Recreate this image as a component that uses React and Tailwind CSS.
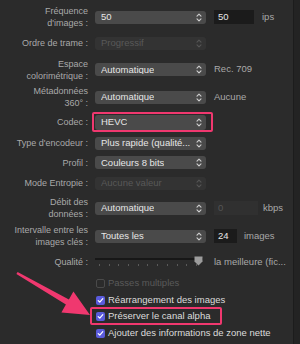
import React from 'react';

const Chevron = ({ dim }) => (
  <svg width="6" height="9" viewBox="0 0 6 9" className="shrink-0">
    <path d="M1 3.2 L3 1.2 L5 3.2 M1 5.8 L3 7.8 L5 5.8" fill="none" stroke={dim ? '#555555' : '#d0d0d0'} strokeWidth="1.1" strokeLinecap="round" strokeLinejoin="round" />
  </svg>
);

const Popup = ({ text, disabled, tall }) => (
  <div
    className={`flex w-[111px] shrink-0 items-center justify-between rounded-[3px] pl-[6px] pr-[4px] ${tall ? 'h-[15px]' : 'h-[13px]'} ${disabled ? 'bg-[#333333] text-[#595959]' : 'bg-[#4a4a4a] text-[#e6e6e6]'}`}
  >
    <span className="truncate text-[9.5px] leading-none">{text}</span>
    <Chevron dim={disabled} />
  </div>
);

const Field = ({ value, w, disabled }) => (
  <div
    className={`ml-[8px] flex h-[14px] shrink-0 items-center px-[4px] text-[9.5px] ${w} ${disabled ? 'bg-[#303030] text-[#555555]' : 'bg-[#1b1b1b] text-[#e6e6e6]'}`}
  >
    {value}
  </div>
);

const Note = ({ children, ml = 'ml-[8px]' }) => (
  <span className={`${ml} text-[9.5px] text-[#a9a9a9] whitespace-nowrap`}>{children}</span>
);

const Row = ({ h, label, children }) => (
  <div className={`flex items-center ${h}`}>
    <div className="w-[88px] shrink-0 text-right text-[9px] leading-[12px] text-[#a9a9a9]">{label}</div>
    <div className="ml-[7px] flex min-w-0 items-center">{children}</div>
  </div>
);

const Check = ({ on, label, h }) => (
  <div className={`flex items-center ${h}`}>
    {on ? (
      <div className="flex h-[9px] w-[9px] shrink-0 items-center justify-center rounded-[2px] bg-[#5a5bdc]">
        <svg width="7" height="7" viewBox="0 0 7 7">
          <path d="M1.2 3.6 L2.8 5.2 L5.8 1.6" fill="none" stroke="#ffffff" strokeWidth="1.2" strokeLinecap="round" strokeLinejoin="round" />
        </svg>
      </div>
    ) : (
      <div className="h-[9px] w-[9px] shrink-0 rounded-[2px] border border-[#4a4a4a]" />
    )}
    <span className={`ml-[3px] text-[9.5px] whitespace-nowrap ${on ? 'text-[#dcdcdc]' : 'text-[#5a5a5a]'}`}>{label}</span>
  </div>
);

export default function App() {
  const ticks = [0, 1, 2, 3, 4, 5, 6, 7, 8, 9, 10];

  return (
    <div className="relative flex h-[344px] w-[300px] overflow-hidden bg-[#2b2b2b] font-['Liberation_Sans',Arial,sans-serif]">
      <div className="flex min-w-0 flex-1 flex-col pt-[4px]">
        <Row h="h-[26px]" label={<>Fréquence<br />d'images :</>}>
          <Popup text="50" />
          <Field value="50" w="w-[40px]" />
          <Note>ips</Note>
        </Row>

        <Row h="h-[26px]" label="Ordre de trame :">
          <Popup text="Progressif" disabled />
        </Row>

        <Row h="h-[27px]" label={<>Espace<br />colorimétrique :</>}>
          <Popup text="Automatique" />
          <Note>Rec. 709</Note>
        </Row>

        <Row h="h-[28px]" label={<>Métadonnées<br />360° :</>}>
          <Popup text="Automatique" />
          <Note>Aucune</Note>
        </Row>

        <Row h="h-[22px]" label="Codec :">
          <div className="relative shrink-0">
            <Popup text="HEVC" tall />
            <div className="pointer-events-none absolute -left-[3px] -right-[7px] -top-[3px] -bottom-[2px] rounded-[2px] border-2 border-[#f0386f]" />
          </div>
        </Row>

        <Row h="h-[20px]" label="Type d'encodeur :">
          <Popup text="Plus rapide (qualité..." />
        </Row>

        <Row h="h-[19px]" label="Profil :">
          <Popup text="Couleurs 8 bits" />
        </Row>

        <Row h="h-[22px]" label="Mode Entropie :">
          <Popup text="Aucune valeur" disabled />
        </Row>

        <Row h="h-[28px]" label={<>Débit des<br />données :</>}>
          <Popup text="Automatique" />
          <Field value="0" w="w-[44px]" disabled />
          <Note ml="ml-[5px]">kbps</Note>
        </Row>

        <Row h="h-[28px]" label={<>Intervalle entre les<br />images clés :</>}>
          <Popup text="Toutes les" />
          <Field value="24" w="w-[23px]" />
          <Note ml="ml-[7px]">images</Note>
        </Row>

        <Row h="h-[24px]" label="Qualité :">
          <div className="relative flex h-[14px] w-[111px] shrink-0 flex-col justify-center">
            <div className="h-[2px] w-[108px] bg-[#171717]" />
            <div className="mt-[4px] flex w-[108px] justify-between pl-[4px] pr-[6px]">
              {ticks.map((t) => (
                <div key={t} className="h-[2px] w-[1px] bg-[#5a5a5a]" />
              ))}
            </div>
            <svg width="9" height="10" viewBox="0 0 9 10" className="absolute left-[99px] top-[1px]">
              <path d="M0.5 0.5 H8.5 V5.5 L4.5 9.5 L0.5 5.5 Z" fill="#9c9c9c" />
            </svg>
          </div>
          <Note ml="ml-[8px]">la meilleure (fic...</Note>
        </Row>

        <div className="ml-[96px] flex flex-col">
          <Check h="h-[18px]" label="Passes multiples" />
          <Check h="h-[16px]" on label="Réarrangement des images" />
          <div className="relative">
            <Check h="h-[17px]" on label="Préserver le canal alpha" />
            <div className="pointer-events-none absolute -left-[6px] top-[-1px] h-[18px] w-[132px] rounded-[2px] border-2 border-[#f0386f]" />
          </div>
          <Check h="h-[16px]" on label="Ajouter des informations de zone nette" />
        </div>
      </div>

      <div className="w-[7px] shrink-0 border-l border-[#1c1c1c] bg-[#232323]" />

      <svg width="300" height="344" className="pointer-events-none absolute left-0 top-0">
        <polygon
          points="17.6,272 68.9,299.4 73.4,291.6 90,315 61.4,312.4 65.9,304.6 16.4,274"
          fill="#f0386f"
        />
      </svg>
    </div>
  );
}
